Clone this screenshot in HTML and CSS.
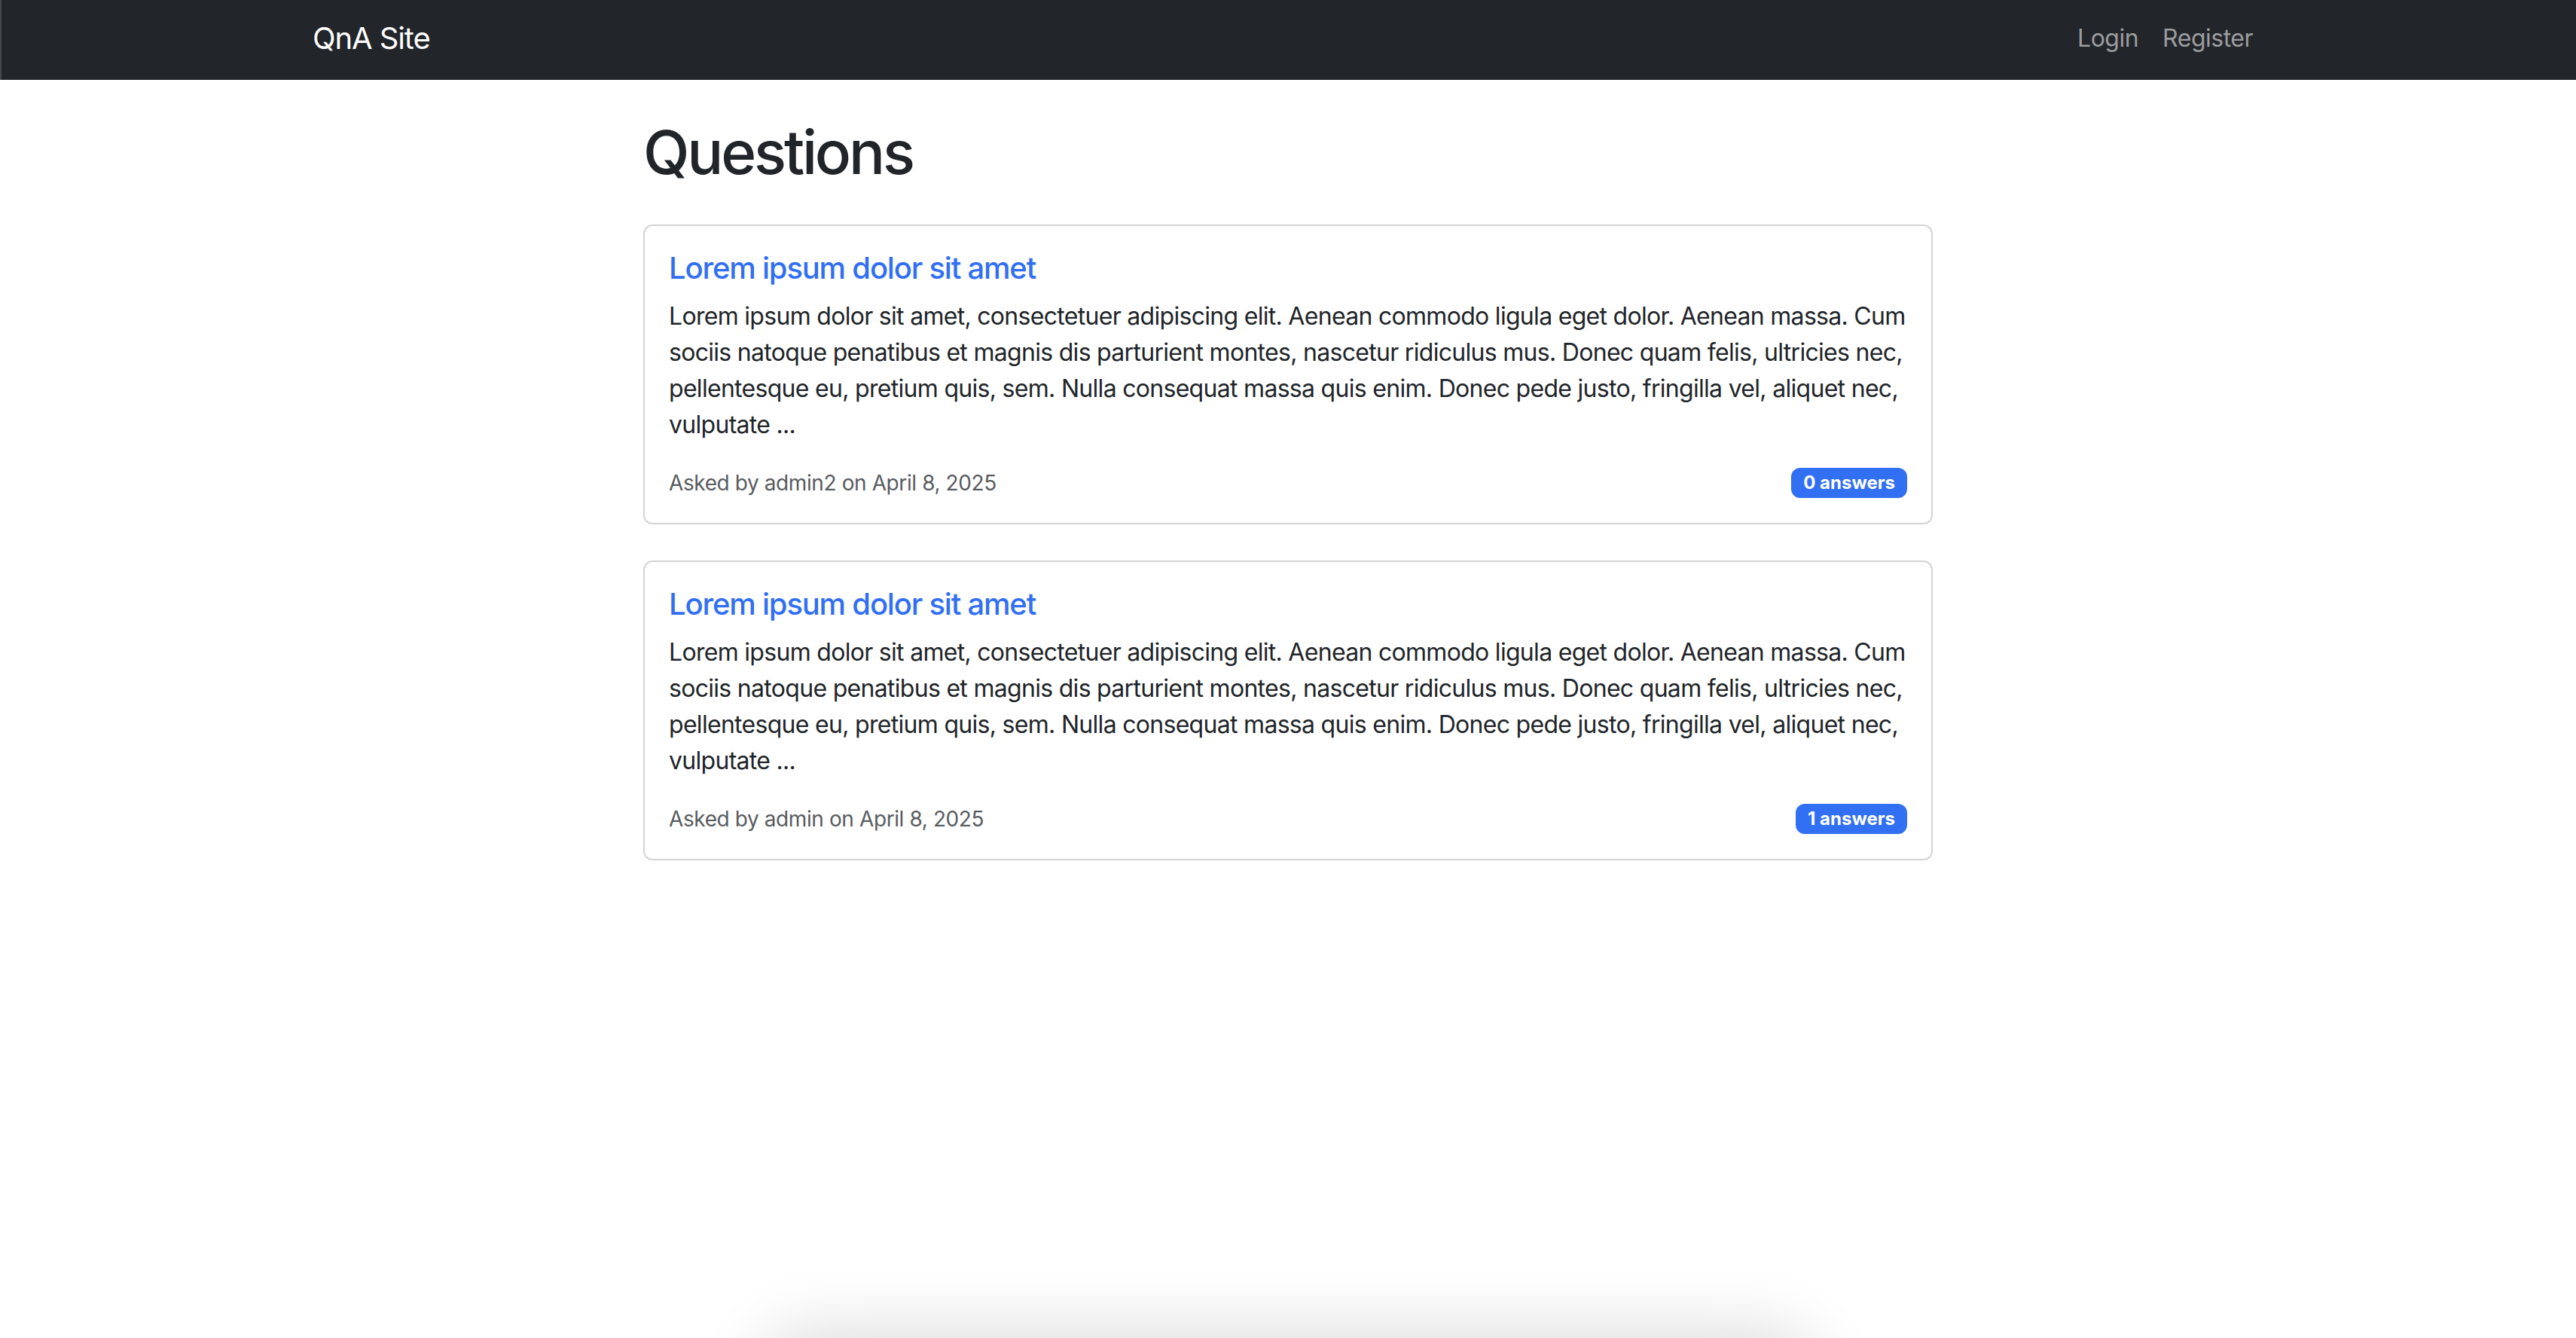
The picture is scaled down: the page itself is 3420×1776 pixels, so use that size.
FILE: index.html
```html
<!DOCTYPE html>
<html lang="en">
<head>
<meta charset="utf-8">
<title>QnA Site</title>
<link rel="stylesheet" href="styles.css">
</head>
<body>
<nav class="navbar">
  <div class="nav-inner">
    <a class="brand" href="#">QnA Site</a>
    <div class="nav-links">
      <a class="nav-link" href="#">Login</a>
      <a class="nav-link" href="#">Register</a>
    </div>
  </div>
</nav>
<main class="main">
  <h1 class="page-title">Questions</h1>
  <div class="card">
    <h5 class="card-title"><a href="#">Lorem ipsum dolor sit amet</a></h5>
    <p class="card-text">Lorem ipsum dolor sit amet, consectetuer adipiscing elit. Aenean commodo ligula eget dolor. Aenean massa. Cum sociis natoque penatibus et magnis dis parturient montes, nascetur ridiculus mus. Donec quam felis, ultricies nec, pellentesque eu, pretium quis, sem. Nulla consequat massa quis enim. Donec pede justo, fringilla vel, aliquet nec, vulputate ...</p>
    <div class="meta">
      <small class="muted">Asked by admin2 on April 8, 2025</small>
      <span class="badge">0 answers</span>
    </div>
  </div>
  <div class="card">
    <h5 class="card-title"><a href="#">Lorem ipsum dolor sit amet</a></h5>
    <p class="card-text">Lorem ipsum dolor sit amet, consectetuer adipiscing elit. Aenean commodo ligula eget dolor. Aenean massa. Cum sociis natoque penatibus et magnis dis parturient montes, nascetur ridiculus mus. Donec quam felis, ultricies nec, pellentesque eu, pretium quis, sem. Nulla consequat massa quis enim. Donec pede justo, fringilla vel, aliquet nec, vulputate ...</p>
    <div class="meta">
      <small class="muted">Asked by admin on April 8, 2025</small>
      <span class="badge">1 answers</span>
    </div>
  </div>
</main>
<div class="bottom-shadow"></div>
</body>
</html>
```
FILE: styles.css
```css
* { box-sizing: border-box; }
html, body { margin: 0; padding: 0; }
body {
  font-family: Inter, "Noto Sans", "Liberation Sans", sans-serif;
  font-size: 32px;
  line-height: 1.5;
  color: #212529;
  background: #fff;
  min-height: 1776px;
  overflow: hidden;
}
a { text-decoration: none; }

.navbar {
  height: 106px;
  background: #222529;
  border-left: 2px solid #45484d;
  display: flex;
  align-items: center;
}
.nav-inner {
  width: 2640px;
  margin: 0 auto;
  padding: 0 24px;
  display: flex;
  align-items: center;
  justify-content: space-between;
}
.brand {
  color: #fff;
  font-size: 40px;
  line-height: 60px;
  letter-spacing: -1.1px;
  margin-top: -4px;
}
.nav-links {
  display: flex;
  margin-top: -4px;
}
.nav-link {
  color: #9b9d9f;
  padding: 0 16px;
  font-size: 32px;
  line-height: 48px;
  letter-spacing: -0.5px;
}

.main {
  width: 1712px;
  margin: 0 auto;
  padding-top: 48px;
}
.page-title {
  margin: 0 0 48px;
  font-size: 80px;
  line-height: 96px;
  font-weight: 500;
  letter-spacing: -3.2px;
}
.card {
  border: 2px solid #d4d4d4;
  border-radius: 12px;
  padding: 32px;
  margin-bottom: 48px;
}
.card-title {
  margin: 0 0 16px;
  font-size: 40px;
  line-height: 48px;
  font-weight: 500;
  letter-spacing: -1.2px;
}
.card-title a { color: #316ff3; }
.card-text {
  margin: 0 0 32px;
  letter-spacing: -0.7px;
}
.meta {
  display: flex;
  justify-content: space-between;
  align-items: center;
}
.muted {
  color: #595c5f;
  font-size: 28px;
  line-height: 42px;
  letter-spacing: -0.4px;
}
.badge {
  background: #316ff3;
  color: #fff;
  font-size: 24px;
  font-weight: 700;
  line-height: 24px;
  padding: 8px 16px;
  border-radius: 12px;
}
.bottom-shadow {
  position: fixed;
  left: 1030px;
  width: 1360px;
  top: 1790px;
  height: 100px;
  border-radius: 60px;
  box-shadow: 0 0 90px 24px rgba(0, 0, 0, 0.14);
}
```
